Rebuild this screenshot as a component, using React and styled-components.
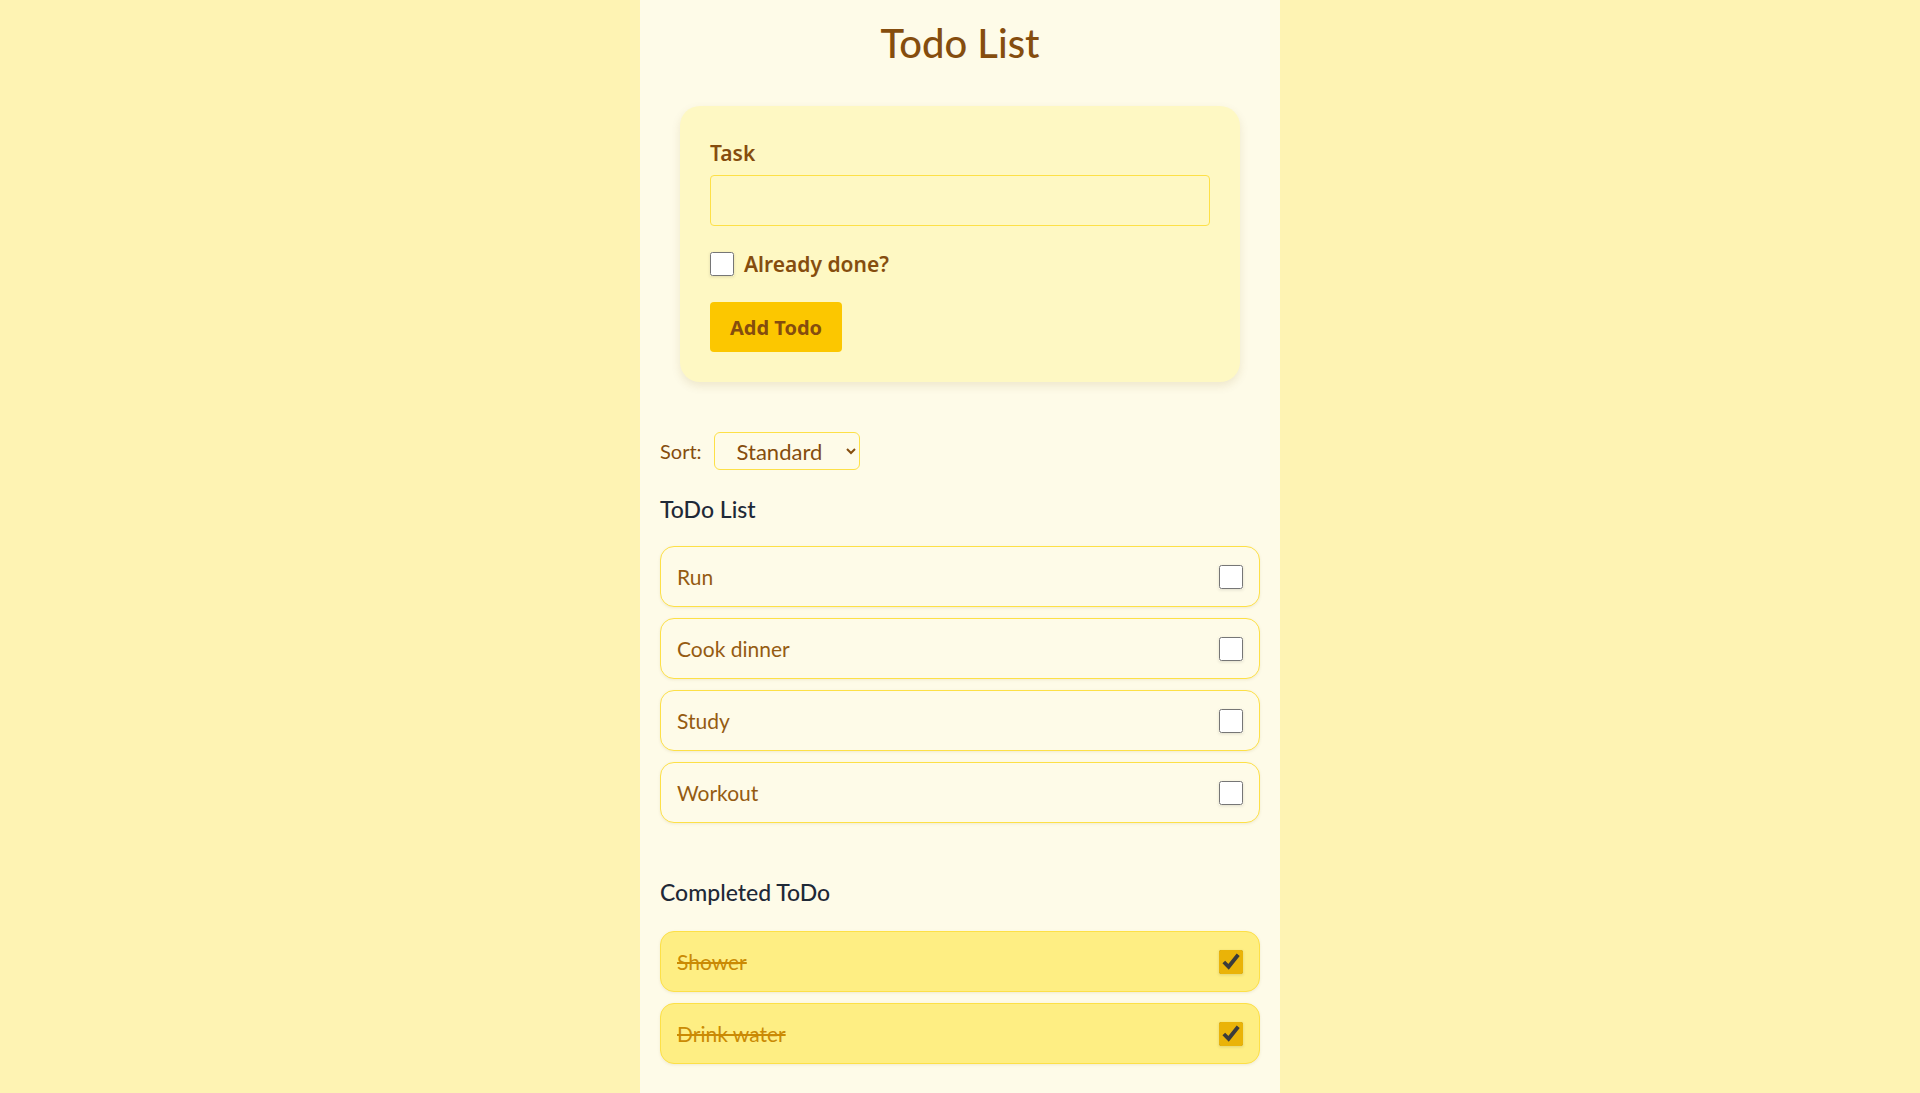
import React, { useState } from 'react'
import styled, { createGlobalStyle } from 'styled-components'

const GlobalStyle = createGlobalStyle`
  html, body {
    margin: 0;
    padding: 0;
    background: #fef3b3;
  }
  * { box-sizing: border-box; }
`

const Page = styled.main`
  width: 640px;
  min-height: 1093px;
  margin: 0 auto;
  padding: 20px 20px 30px;
  background: #fefbe8;
  font-family: 'Lato', 'Noto Sans', sans-serif;
`

const Title = styled.h1`
  margin: 0 0 40px;
  font-size: 40px;
  line-height: 46px;
  font-weight: 500;
  text-align: center;
  color: #854d0e;
`

const FormCard = styled.form`
  margin: 0 20px;
  padding: 32px 30px 30px;
  background: #fef8c3;
  border-radius: 20px;
  box-shadow: 0 4px 10px rgba(120, 90, 0, 0.12);
  font-family: 'Noto Sans', 'Open Sans', sans-serif;
  color: #854d0e;
`

const Label = styled.label`
  display: block;
  margin-bottom: 7px;
  font-size: 21px;
  line-height: 30px;
  font-weight: 600;
`

const TextInput = styled.input`
  display: block;
  width: 100%;
  height: 51px;
  padding: 0 12px;
  background: #fef8c3;
  border: 1px solid #fde047;
  border-radius: 4px;
  font-size: 18px;
  outline: none;
`

const CheckRow = styled.label`
  display: flex;
  align-items: center;
  gap: 10px;
  margin: 25px 0 25px;
  font-size: 21px;
  font-weight: 600;
  line-height: 26px;
`

const Check = styled.input.attrs({ type: 'checkbox' })`
  width: 24px;
  height: 24px;
  margin: 0;
  accent-color: #eab308;
  flex-shrink: 0;
  box-shadow: 0 1px 3px rgba(0, 0, 0, 0.12);
  border-radius: 3px;
`

const Button = styled.button`
  height: 50px;
  padding: 0 20px;
  background: #fcc700;
  border: none;
  border-radius: 4px;
  color: #854d0e;
  font-family: 'Noto Sans', 'Open Sans', sans-serif;
  font-size: 20px;
  font-weight: 700;
  cursor: pointer;
`

const SortRow = styled.div`
  display: flex;
  align-items: center;
  gap: 12px;
  margin-top: 50px;
  color: #854d0e;
  font-size: 20px;
`

const Select = styled.select`
  height: 38px;
  width: 146px;
  padding: 0 6px 0 18px;
  background: #fefbe8;
  border: 1px solid #fde047;
  border-radius: 6px;
  color: #854d0e;
  font-family: 'Lato', 'Noto Sans', sans-serif;
  font-size: 22px;
`

const SectionTitle = styled.h2`
  margin: ${p => (p.$first ? '25px 0 23px' : '55px 0 25px')};
  font-size: 23px;
  line-height: 28px;
  font-weight: 500;
  color: #1f2937;
`

const List = styled.ul`
  display: flex;
  flex-direction: column;
  gap: 11px;
  margin: 0;
  padding: 0;
  list-style: none;
`

const Item = styled.li`
  display: flex;
  align-items: center;
  justify-content: space-between;
  height: 61px;
  padding: 0 16px;
  background: ${p => (p.$done ? '#feee83' : '#fefbe8')};
  border: 1px solid #fde047;
  border-radius: 14px;
  box-shadow: 0 1px 3px rgba(120, 90, 0, 0.1);
`

const ItemText = styled.span`
  font-size: 21px;
  color: ${p => (p.$done ? '#ca8a04' : '#955b12')};
  text-decoration: ${p => (p.$done ? 'line-through' : 'none')};
`

const initial = [
  { id: 1, text: 'Run', done: false },
  { id: 2, text: 'Cook dinner', done: false },
  { id: 3, text: 'Study', done: false },
  { id: 4, text: 'Workout', done: false },
  { id: 5, text: 'Shower', done: true },
  { id: 6, text: 'Drink water', done: true },
]

export default function App() {
  const [todos, setTodos] = useState(initial)
  const [task, setTask] = useState('')
  const [already, setAlready] = useState(false)

  const toggle = id =>
    setTodos(todos.map(t => (t.id === id ? { ...t, done: !t.done } : t)))

  const add = e => {
    e.preventDefault()
    if (!task.trim()) return
    setTodos([...todos, { id: Date.now(), text: task, done: already }])
    setTask('')
    setAlready(false)
  }

  const open = todos.filter(t => !t.done)
  const done = todos.filter(t => t.done)

  return (
    <>
      <GlobalStyle />
      <Page>
        <Title>Todo List</Title>
        <FormCard onSubmit={add}>
          <Label htmlFor="task">Task</Label>
          <TextInput id="task" value={task} onChange={e => setTask(e.target.value)} />
          <CheckRow>
            <Check checked={already} onChange={e => setAlready(e.target.checked)} />
            Already done?
          </CheckRow>
          <Button type="submit">Add Todo</Button>
        </FormCard>

        <SortRow>
          <span>Sort:</span>
          <Select defaultValue="standard">
            <option value="standard">Standard</option>
            <option value="az">A-Z</option>
            <option value="za">Z-A</option>
          </Select>
        </SortRow>

        <SectionTitle $first>ToDo List</SectionTitle>
        <List>
          {open.map(t => (
            <Item key={t.id}>
              <ItemText>{t.text}</ItemText>
              <Check checked={false} onChange={() => toggle(t.id)} />
            </Item>
          ))}
        </List>

        <SectionTitle>Completed ToDo</SectionTitle>
        <List>
          {done.map(t => (
            <Item key={t.id} $done>
              <ItemText $done>{t.text}</ItemText>
              <Check checked onChange={() => toggle(t.id)} />
            </Item>
          ))}
        </List>
      </Page>
    </>
  )
}
